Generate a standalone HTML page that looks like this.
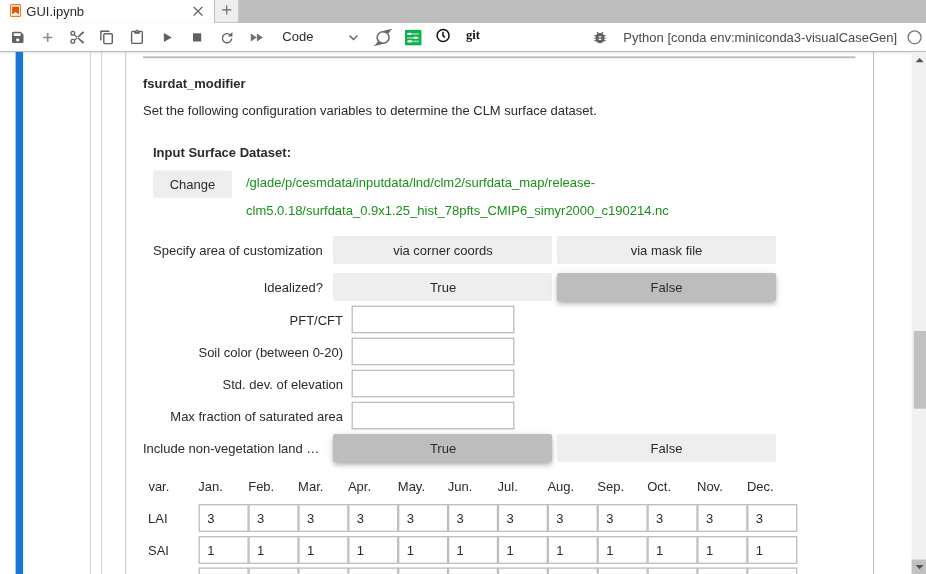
<!DOCTYPE html>
<html>
<head>
<meta charset="utf-8">
<title>GUI.ipynb</title>
<style>
*{box-sizing:border-box;margin:0;padding:0}
html,body{width:926px;height:574px;overflow:hidden;background:#fff}
body{font-family:"Liberation Sans",sans-serif;font-size:13px;color:#2b2b2b;position:relative}
.abs{position:absolute}
#tabtitle{left:26.300px;top:4px;font-size:13px;line-height:16px;color:#2b2b2b}
.tbtxt{font-size:13px;line-height:16px;color:#2b2b2b;white-space:nowrap}
.t{white-space:nowrap;line-height:16px;font-size:13px;color:#2b2b2b}
.b{font-weight:bold}
.btn{background:#eeeeee;padding-left:1px;height:28px;line-height:30px;text-align:center;font-size:13px;color:#2b2b2b;white-space:nowrap;border-radius:2px}
.btn.on{background:#bdbdbd;box-shadow:0 4px 5px 0 rgba(0,0,0,.14),0 1px 10px 0 rgba(0,0,0,.10),0 2px 4px -1px rgba(0,0,0,.18)}
.lbl{text-align:right;white-space:nowrap;line-height:30px;height:28px;font-size:13px;color:#2b2b2b}
#bg{left:0;top:0}
.gs{filter:blur(0.3px)}
.t,.btn,.lbl{filter:blur(0.3px)}
</style>
</head>
<body>
<!-- background shapes: tab bar, toolbar, notebook chrome, input boxes -->
<svg id="bg" class="abs" width="926" height="574" viewBox="0 0 926 574">
 <rect x="0" y="0" width="926" height="23" fill="#bdbdbd"/>
 <rect x="0" y="0" width="214" height="24" fill="#fff"/>
 <rect x="0" y="22.200" width="214" height="0.800" fill="#f7f7f7"/>
 <rect x="214" y="0" width="24.200" height="22.700" fill="#eeeeee"/>
 <rect x="214" y="0" width="1" height="22.700" fill="#bdbdbd"/>
 <rect x="214" y="21.900" width="24.200" height="1" fill="#c4c4c4"/>
 <rect x="0" y="23" width="926" height="28" fill="#fff"/>
 <rect x="0" y="50.900" width="926" height="1.200" fill="#bdbdbd"/>
 <defs><linearGradient id="tsh" x1="0" y1="0" x2="0" y2="1"><stop offset="0" stop-color="#000" stop-opacity="0.070"/><stop offset="1" stop-color="#000" stop-opacity="0"/></linearGradient></defs>
 <rect x="0" y="52" width="912" height="3" fill="url(#tsh)"/>
 <!-- notebook -->
 <rect x="15.600" y="52" width="7.500" height="522" fill="#1976d2"/>
 <rect x="90" y="52" width="1.100" height="522" fill="#d4d4d4"/>
 <rect x="101" y="52" width="1.100" height="522" fill="#d4d4d4"/>
 <rect x="125" y="52" width="1.400" height="522" fill="#d4d4d4"/>
 <rect x="873" y="52" width="1.100" height="522" fill="#bdbdbd"/>
 <rect x="143" y="56.400" width="712.400" height="1.800" fill="#bababa"/>
 <!-- scrollbar -->
 <rect x="911.600" y="52" width="14.400" height="522" fill="#f1f1f1"/>
 <rect x="913.800" y="331" width="12.200" height="77.700" fill="#c1c1c1"/>
 <rect x="911.600" y="559.600" width="14.400" height="14.400" fill="#c1c1c1"/>
 <path d="M915.600 62.200h8L919.600 58z" fill="#505050"/>
 <path d="M915.600 565h8L919.600 569.200z" fill="#505050"/>
 <rect x="153" y="170.500" width="79" height="27.500" rx="2" fill="#eeeeee"/>
 <!-- boxes -->
<rect x="352.2" y="306.20" width="161.6" height="26.4" fill="#fff" stroke="#bdbdbd" stroke-width="1.3"/>
<rect x="352.2" y="338.27" width="161.6" height="26.4" fill="#fff" stroke="#bdbdbd" stroke-width="1.3"/>
<rect x="352.2" y="370.34" width="161.6" height="26.4" fill="#fff" stroke="#bdbdbd" stroke-width="1.3"/>
<rect x="352.2" y="402.41" width="161.6" height="26.4" fill="#fff" stroke="#bdbdbd" stroke-width="1.3"/>
<rect x="199.20" y="504.70" width="48.9" height="26.6" fill="#fff" stroke="#bdbdbd" stroke-width="1.3"/>
<rect x="249.07" y="504.70" width="48.9" height="26.6" fill="#fff" stroke="#bdbdbd" stroke-width="1.3"/>
<rect x="298.95" y="504.70" width="48.9" height="26.6" fill="#fff" stroke="#bdbdbd" stroke-width="1.3"/>
<rect x="348.82" y="504.70" width="48.9" height="26.6" fill="#fff" stroke="#bdbdbd" stroke-width="1.3"/>
<rect x="398.70" y="504.70" width="48.9" height="26.6" fill="#fff" stroke="#bdbdbd" stroke-width="1.3"/>
<rect x="448.57" y="504.70" width="48.9" height="26.6" fill="#fff" stroke="#bdbdbd" stroke-width="1.3"/>
<rect x="498.45" y="504.70" width="48.9" height="26.6" fill="#fff" stroke="#bdbdbd" stroke-width="1.3"/>
<rect x="548.33" y="504.70" width="48.9" height="26.6" fill="#fff" stroke="#bdbdbd" stroke-width="1.3"/>
<rect x="598.20" y="504.70" width="48.9" height="26.6" fill="#fff" stroke="#bdbdbd" stroke-width="1.3"/>
<rect x="648.08" y="504.70" width="48.9" height="26.6" fill="#fff" stroke="#bdbdbd" stroke-width="1.3"/>
<rect x="697.95" y="504.70" width="48.9" height="26.6" fill="#fff" stroke="#bdbdbd" stroke-width="1.3"/>
<rect x="747.83" y="504.70" width="48.9" height="26.6" fill="#fff" stroke="#bdbdbd" stroke-width="1.3"/>
<rect x="199.20" y="536.70" width="48.9" height="26.6" fill="#fff" stroke="#bdbdbd" stroke-width="1.3"/>
<rect x="249.07" y="536.70" width="48.9" height="26.6" fill="#fff" stroke="#bdbdbd" stroke-width="1.3"/>
<rect x="298.95" y="536.70" width="48.9" height="26.6" fill="#fff" stroke="#bdbdbd" stroke-width="1.3"/>
<rect x="348.82" y="536.70" width="48.9" height="26.6" fill="#fff" stroke="#bdbdbd" stroke-width="1.3"/>
<rect x="398.70" y="536.70" width="48.9" height="26.6" fill="#fff" stroke="#bdbdbd" stroke-width="1.3"/>
<rect x="448.57" y="536.70" width="48.9" height="26.6" fill="#fff" stroke="#bdbdbd" stroke-width="1.3"/>
<rect x="498.45" y="536.70" width="48.9" height="26.6" fill="#fff" stroke="#bdbdbd" stroke-width="1.3"/>
<rect x="548.33" y="536.70" width="48.9" height="26.6" fill="#fff" stroke="#bdbdbd" stroke-width="1.3"/>
<rect x="598.20" y="536.70" width="48.9" height="26.6" fill="#fff" stroke="#bdbdbd" stroke-width="1.3"/>
<rect x="648.08" y="536.70" width="48.9" height="26.6" fill="#fff" stroke="#bdbdbd" stroke-width="1.3"/>
<rect x="697.95" y="536.70" width="48.9" height="26.6" fill="#fff" stroke="#bdbdbd" stroke-width="1.3"/>
<rect x="747.83" y="536.70" width="48.9" height="26.6" fill="#fff" stroke="#bdbdbd" stroke-width="1.3"/>
<rect x="199.20" y="568.10" width="48.9" height="26.6" fill="#fff" stroke="#bdbdbd" stroke-width="1.3"/>
<rect x="249.07" y="568.10" width="48.9" height="26.6" fill="#fff" stroke="#bdbdbd" stroke-width="1.3"/>
<rect x="298.95" y="568.10" width="48.9" height="26.6" fill="#fff" stroke="#bdbdbd" stroke-width="1.3"/>
<rect x="348.82" y="568.10" width="48.9" height="26.6" fill="#fff" stroke="#bdbdbd" stroke-width="1.3"/>
<rect x="398.70" y="568.10" width="48.9" height="26.6" fill="#fff" stroke="#bdbdbd" stroke-width="1.3"/>
<rect x="448.57" y="568.10" width="48.9" height="26.6" fill="#fff" stroke="#bdbdbd" stroke-width="1.3"/>
<rect x="498.45" y="568.10" width="48.9" height="26.6" fill="#fff" stroke="#bdbdbd" stroke-width="1.3"/>
<rect x="548.33" y="568.10" width="48.9" height="26.6" fill="#fff" stroke="#bdbdbd" stroke-width="1.3"/>
<rect x="598.20" y="568.10" width="48.9" height="26.6" fill="#fff" stroke="#bdbdbd" stroke-width="1.3"/>
<rect x="648.08" y="568.10" width="48.9" height="26.6" fill="#fff" stroke="#bdbdbd" stroke-width="1.3"/>
<rect x="697.95" y="568.10" width="48.9" height="26.6" fill="#fff" stroke="#bdbdbd" stroke-width="1.3"/>
<rect x="747.83" y="568.10" width="48.9" height="26.6" fill="#fff" stroke="#bdbdbd" stroke-width="1.3"/>
</svg>

<svg class="abs" style="left:10px;top:4px" width="12" height="14" viewBox="0 0 12 14"><rect x="0.600" y="0.600" width="9.900" height="11.800" fill="#fff" stroke="#ef7a2a" stroke-width="1.100" rx="0.800"/><path d="M2.100 2.800h6.900v7.600l-3.450-2.300L2.100 10.400z" fill="#e65100"/></svg>
<div id="tabtitle" class="abs gs">GUI.ipynb</div>
<svg class="abs" style="left:192px;top:5px" width="12" height="12" viewBox="0 0 12 12"><path d="M1.600 1.900l8.800 8.700M10.400 1.900l-8.800 8.700" stroke="#5a5a5a" stroke-width="1.300" fill="none"/></svg>
<svg class="abs" style="left:221px;top:4px" width="12" height="12" viewBox="0 0 12 12"><path d="M5.700 1.300v9.200M1.100 5.900h9.200" stroke="#666" stroke-width="1.150" fill="none"/></svg>

<!-- toolbar icons -->
<svg class="abs" style="left:0;top:23px" width="926" height="28" viewBox="0 0 926 28">
 <g fill="#616161">
  <!-- save -->
  <path d="M12 10.300a1.500 1.500 0 0 1 1.500-1.500h7.200l2.800 2.800v6.900a1.500 1.500 0 0 1-1.500 1.500h-8.500a1.500 1.500 0 0 1-1.500-1.500zM13.700 10.300v2.600h7v-2.600zM17.700 15.200a1.700 1.700 0 1 0 0 3.400a1.700 1.700 0 0 0 0-3.400z" fill-rule="evenodd"/>
  <!-- insert -->
  <path d="M46.900 10h1.600v3.700h3.700v1.600h-3.700v3.700h-1.600v-3.700h-3.700v-1.600h3.700z" fill="#8c8c8c"/>
  <!-- run -->
  <path d="M163.900 10l7.800 4.550l-7.800 4.550z"/>
  <!-- stop -->
  <rect x="193" y="10.300" width="8.200" height="8.200"/>
  <!-- restart-run -->
  <path d="M250.800 10.500l6 4l-6 4zM256.900 10.500l6 4l-6 4z" fill="#707070"/>
 </g>
 <!-- cut -->
 <g fill="none" stroke="#616161" stroke-width="1.300">
  <circle cx="72.800" cy="10.300" r="1.900"/><circle cx="72.800" cy="18.300" r="1.900"/>
 </g>
 <path d="M73.870 11.980L74.530 11.220L84.260 19.150L82.940 20.650zM73.870 17.020L74.530 17.780L84.260 9.850L82.940 8.350z" fill="#616161"/>
 <!-- copy -->
 <g fill="none" stroke="#616161" stroke-width="1.400">
  <path d="M100.900 17.500v-9.200h8.600"/><rect x="103.800" y="10.700" width="8.500" height="9.900" rx="1"/>
 </g>
 <!-- paste -->
 <g fill="none" stroke="#616161" stroke-width="1.400">
  <rect x="131.600" y="8.400" width="10.700" height="12" rx="1"/>
  <path d="M134.200 10.800v-2.700h1.300a1.500 1.500 0 0 1 3 0h1.300v2.700z" fill="#616161" stroke="none"/>
 </g>
 <circle cx="137" cy="8.300" r="0.700" fill="#c8c8c8"/>
 <!-- restart -->
 <g fill="none" stroke="#616161" stroke-width="1.400">
  <path d="M230.500 12.200a4.600 4.600 0 1 0 1.100 3.300"/>
 </g>
 <path d="M232.400 9v4.400h-4.400z" fill="#616161"/>
 <!-- select caret -->
 <path d="M349.500 12.500l4 4l4-4" fill="none" stroke="#616161" stroke-width="1.400"/>
 <!-- jupytext -->
 <ellipse cx="383.100" cy="14.500" rx="5.950" ry="5.700" fill="none" stroke="#6a6a6a" stroke-width="1.600"/>
 <path d="M381.200 8.700Q386.500 7 392.600 5.800Q389.900 7.500 388.700 10.300zM385 20.300Q379.700 22 373.600 23.200Q376.300 21.500 377.500 18.700z" fill="#666"/>
 <!-- green -->
 <rect x="405" y="6.900" width="16.400" height="15.400" fill="#0cb14b"/>
 <g fill="#fff" opacity=".5"><rect x="406.900" y="10" width="12.200" height="1.800" rx="0.900"/><rect x="406.900" y="13.900" width="12.200" height="1.800" rx="0.900"/><rect x="406.900" y="17.500" width="12.200" height="1.800" rx="0.900"/></g>
 <g fill="#fff"><ellipse cx="409.500" cy="10.900" rx="2.300" ry="1.100"/><ellipse cx="415.600" cy="14.800" rx="2" ry="1.200"/><ellipse cx="409.800" cy="18.400" rx="2.400" ry="1.100"/></g>
 <!-- clock -->
 <circle cx="443.100" cy="12.500" r="6" fill="none" stroke="#111" stroke-width="1.500"/>
 <path d="M443 8.800v4.100l2 1.500" fill="none" stroke="#111" stroke-width="1.500"/>
 <!-- bug -->
 <path transform="translate(591.700 6.820) scale(0.690 0.640)" fill="#616161" d="M20 8h-2.810a5.985 5.985 0 0 0-1.820-1.960L17 4.410 15.590 3l-2.170 2.170a6.002 6.002 0 0 0-2.830 0L8.410 3 7 4.410l1.620 1.630C7.880 6.550 7.260 7.220 6.810 8H4v2h2.090c-.05.330-.09.660-.09 1v1H4v2h2v1c0 .340.040.670.090 1H4v2h2.810c1.040 1.790 2.970 3 5.190 3s4.150-1.210 5.190-3H20v-2h-2.090c.050-.330.090-.660.090-1v-1h2v-2h-2v-1c0-.340-.04-.670-.09-1H20V8zm-6 8h-4v-2h4v2zm0-4h-4v-2h4v2z"/>
 <!-- kernel status -->
 <circle cx="914.600" cy="14.300" r="6.500" fill="none" stroke="#757575" stroke-width="1.300"/>
</svg>
<div class="abs tbtxt gs" style="left:282.300px;top:29px">Code</div>
<div class="abs gs" style="left:466px;top:27px;font-family:'Liberation Serif',serif;font-weight:bold;font-size:12.500px;line-height:16px;color:#111">git</div>
<div class="abs tbtxt gs" style="left:623.300px;top:30px;color:#4a4a4a">Python [conda env:miniconda3-visualCaseGen]</div>

<!-- cell output -->
<div class="abs t b" style="left:143px;top:76px">fsurdat_modifier</div>
<div class="abs t" style="left:143px;top:103px">Set the following configuration variables to determine the CLM surface dataset.</div>
<div class="abs t b" style="left:153px;top:145px">Input Surface Dataset:</div>
<div class="abs btn" style="left:153px;top:170px;width:79px;height:28px;line-height:30px;background:none;padding-left:0">Change</div>
<div class="abs t" style="left:246px;top:175px;color:#1a8f1a">/glade/p/cesmdata/inputdata/lnd/clm2/surfdata_map/release-</div>
<div class="abs t" style="left:246px;top:203px;color:#1a8f1a">clm5.0.18/surfdata_0.9x1.25_hist_78pfts_CMIP6_simyr2000_c190214.nc</div>

<div class="abs lbl" style="left:143px;top:236px;width:186px;text-align:left;padding-left:10px">Specify area of customization</div>
<div class="abs btn" style="left:333px;top:236px;width:219px">via corner coords</div>
<div class="abs btn" style="left:557px;top:236px;width:219px;padding-left:0">via mask file</div>

<div class="abs lbl" style="left:143px;top:273px;width:180px">Idealized?</div>
<div class="abs btn" style="left:333px;top:273px;width:219px">True</div>
<div class="abs btn on" style="left:557px;top:273px;width:219px;padding-left:0">False</div>

<div class="abs lbl" style="left:143px;top:306px;width:200px">PFT/CFT</div>
<div class="abs lbl" style="left:143px;top:338px;width:200px">Soil color (between 0-20)</div>
<div class="abs lbl" style="left:143px;top:370px;width:200px">Std. dev. of elevation</div>
<div class="abs lbl" style="left:143px;top:402px;width:200px">Max fraction of saturated area</div>

<div class="abs lbl" style="left:143px;top:434px;width:186px;text-align:left">Include non-vegetation land …</div>
<div class="abs btn on" style="left:333px;top:434px;width:219px">True</div>
<div class="abs btn" style="left:557px;top:434px;width:219px;padding-left:0">False</div>

<!-- monthly grid -->
<div class="abs t" style="left:148.4px;top:479px">var.</div>
<div class="abs t" style="left:198.3px;top:479px">Jan.</div>
<div class="abs t" style="left:248.2px;top:479px">Feb.</div>
<div class="abs t" style="left:298.1px;top:479px">Mar.</div>
<div class="abs t" style="left:347.9px;top:479px">Apr.</div>
<div class="abs t" style="left:397.8px;top:479px">May.</div>
<div class="abs t" style="left:447.7px;top:479px">Jun.</div>
<div class="abs t" style="left:497.6px;top:479px">Jul.</div>
<div class="abs t" style="left:547.4px;top:479px">Aug.</div>
<div class="abs t" style="left:597.3px;top:479px">Sep.</div>
<div class="abs t" style="left:647.2px;top:479px">Oct.</div>
<div class="abs t" style="left:697.0px;top:479px">Nov.</div>
<div class="abs t" style="left:746.9px;top:479px">Dec.</div>
<div class="abs t" style="left:148px;top:511px">LAI</div>
<div class="abs t" style="left:207.2px;top:511px">3</div>
<div class="abs t" style="left:257.1px;top:511px">3</div>
<div class="abs t" style="left:306.9px;top:511px">3</div>
<div class="abs t" style="left:356.8px;top:511px">3</div>
<div class="abs t" style="left:406.7px;top:511px">3</div>
<div class="abs t" style="left:456.6px;top:511px">3</div>
<div class="abs t" style="left:506.4px;top:511px">3</div>
<div class="abs t" style="left:556.3px;top:511px">3</div>
<div class="abs t" style="left:606.2px;top:511px">3</div>
<div class="abs t" style="left:656.1px;top:511px">3</div>
<div class="abs t" style="left:706.0px;top:511px">3</div>
<div class="abs t" style="left:755.8px;top:511px">3</div>
<div class="abs t" style="left:148px;top:543px">SAI</div>
<div class="abs t" style="left:207.2px;top:543px">1</div>
<div class="abs t" style="left:257.1px;top:543px">1</div>
<div class="abs t" style="left:306.9px;top:543px">1</div>
<div class="abs t" style="left:356.8px;top:543px">1</div>
<div class="abs t" style="left:406.7px;top:543px">1</div>
<div class="abs t" style="left:456.6px;top:543px">1</div>
<div class="abs t" style="left:506.4px;top:543px">1</div>
<div class="abs t" style="left:556.3px;top:543px">1</div>
<div class="abs t" style="left:606.2px;top:543px">1</div>
<div class="abs t" style="left:656.1px;top:543px">1</div>
<div class="abs t" style="left:706.0px;top:543px">1</div>
<div class="abs t" style="left:755.8px;top:543px">1</div>
</body>
</html>
